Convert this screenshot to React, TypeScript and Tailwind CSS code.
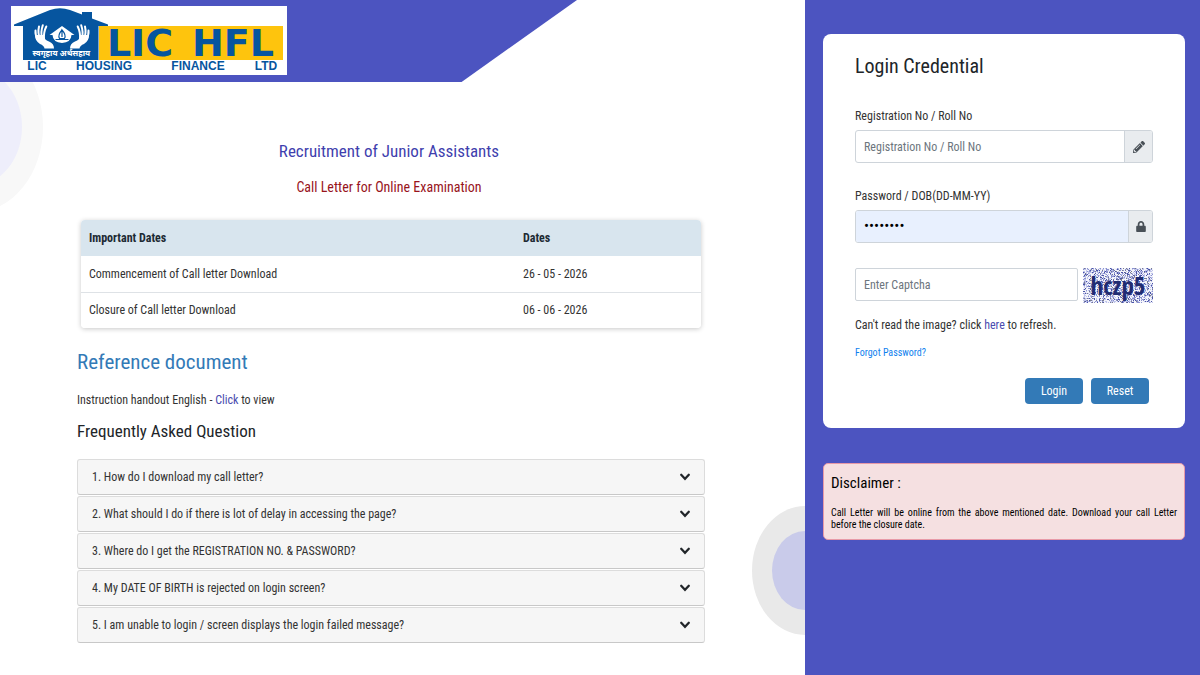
import { useId, useState } from "react";
import { FaLock, FaPencilAlt } from "react-icons/fa";

const importantDates = [
  { label: "Commencement of Call letter Download", date: "26 - 05 - 2026" },
  { label: "Closure of Call letter Download", date: "06 - 06 - 2026" },
];

const questions = [
  "1. How do I download my call letter?",
  "2. What should I do if there is lot of delay in accessing the page?",
  "3. Where do I get the REGISTRATION NO. & PASSWORD?",
  "4. My DATE OF BIRTH is rejected on login screen?",
  "5. I am unable to login / screen displays the login failed message?",
];

function Hand() {
  return (
    <g>
      <g fill="none" stroke="#fff" strokeWidth="2" strokeLinecap="round">
        <path d="M24.500 24.500 Q24 29 27 34" />
        <path d="M28 20.500 Q26.500 27 29 33" />
        <path d="M31.800 19.300 Q29.500 26 31 32" />
        <path d="M35.300 20.500 Q32.500 26 33 33" />
      </g>
      <path d="M24 29 L33 29 Q33 34 38 35.500 Q43 37.500 43 42.500 H33.500 Q33 39.500 29 38 Q24 35 24 29 Z" fill="#fff" />
    </g>
  );
}

function Logo() {
  return (
    <svg viewBox="0 0 276 69" className="block h-[69px] w-[276px] bg-white" role="img" aria-label="LIC HFL">
      <rect x="88" y="20" width="184" height="34" fill="#fec40d" />
      <path d="M3 18.500 L39 4 Q49 0.500 59 4 L71 8.500 V6 H81 V12.500 L97 18.500 V20 H87.500 V54 H12 V20 H3 Z" fill="#06559f" />
      <Hand />
      <g transform="matrix(-1 0 0 1 102 0)">
        <Hand />
      </g>
      <path d="M38.500 29 L51 20 L63.500 29 H60.500 Q60 36.500 51 37 Q42 36.500 41.500 29 Z" fill="#fff" />
      <path d="M51 24 Q46.500 29 48.500 32.500 H53.500 Q55.500 29 51 24 V31 M44.500 33.500 H57.500" fill="none" stroke="#06559f" strokeWidth="1.200" />
      <g fill="#fff" fontSize="8" fontWeight="700" fontFamily="'Noto Sans Devanagari', 'Noto Sans', sans-serif">
        <text x="34" y="50" textAnchor="middle">स्वगृहाय</text>
        <text x="64" y="50" textAnchor="middle">अर्थसहाय</text>
      </g>
      <g fill="#06559f" fontWeight="700" fontFamily="'DejaVu Sans', sans-serif" textAnchor="middle">
        <text x="129" y="50" fontSize="38">LIC</text>
        <text x="222" y="50" fontSize="38">HFL</text>
        <g fontSize="12" fontFamily="'Liberation Sans', sans-serif">
          <text x="26" y="63.500">LIC</text>
          <text x="93" y="63.500">HOUSING</text>
          <text x="187" y="63.500">FINANCE</text>
          <text x="255" y="63.500">LTD</text>
        </g>
      </g>
    </svg>
  );
}

function makeSpeckles() {
  const fills = ["#4a54a6", "#8b92d0", "#c0c4ea", "#777b90"];
  const dots: { x: number; y: number; fill: string }[] = [];
  let seed = 7919;
  for (let y = 0; y < 35; y++) {
    for (let x = 0; x < 70; x++) {
      seed = (seed * 48271) % 2147483647;
      const roll = seed % 100;
      if (roll < 58) dots.push({ x, y, fill: fills[roll < 10 ? 0 : roll < 29 ? 1 : roll < 51 ? 2 : 3] });
    }
  }
  return dots;
}

const speckles = makeSpeckles();

function Captcha() {
  return (
    <svg viewBox="0 0 70 35" className="h-[35px] w-[70px] shrink-0" role="img" aria-label="Captcha">
      <rect width="70" height="35" fill="#f4f5fb" />
      {speckles.map((d) => (
        <rect key={`${d.x}-${d.y}`} x={d.x} y={d.y} width="1" height="1" fill={d.fill} />
      ))}
      <text x="35" y="26.500" textAnchor="middle" fontSize="25" fontWeight="700" fill="#202c72" fontFamily="'Open Sans Condensed', 'Noto Sans', sans-serif">
        hczp5
      </text>
    </svg>
  );
}

function Chevron({ open }: { open: boolean }) {
  return (
    <svg viewBox="0 0 10 8" className={open ? "h-2 w-[10px] rotate-180" : "h-2 w-[10px]"} aria-hidden="true">
      <path d="M1.200 1.700 L5 5.800 L8.800 1.700" fill="none" stroke="#212529" strokeWidth="2.200" strokeLinecap="round" />
    </svg>
  );
}

function Faq() {
  const [open, setOpen] = useState<number | null>(null);
  return (
    <div className="mt-4 flex flex-col gap-px">
      {questions.map((q, i) => (
        <div key={q} className="rounded-[3px] border border-[#dcdcdc] border-b-[#c8c8c8] bg-[#f6f6f6]">
          <button
            type="button"
            aria-expanded={open === i}
            onClick={() => setOpen(open === i ? null : i)}
            className="flex h-[34px] w-full items-center justify-between px-3.5 text-left text-[12px] text-[#333]"
          >
            {q}
            <Chevron open={open === i} />
          </button>
        </div>
      ))}
    </div>
  );
}

function LoginCard() {
  const id = useId();
  return (
    <form className="rounded-lg bg-white px-8 pt-4 pb-6 text-[#333]" onSubmit={(e) => e.preventDefault()}>
      <h2 className="text-[20px] leading-8 text-[#212529]">Login Credential</h2>

      <label htmlFor={`${id}-reg`} className="mt-6 block text-[12px] leading-5">Registration No / Roll No</label>
      <div className="mt-1 flex h-[33px] overflow-hidden rounded-[3px] border border-[#ced4da]">
        <input id={`${id}-reg`} type="text" placeholder="Registration No / Roll No" className="min-w-0 flex-1 px-2 text-[12px] outline-none placeholder:text-[#6c757d]" />
        <span className="flex w-7 items-center justify-center border-l border-[#ced4da] bg-[#e9ecef] text-[#495057]">
          <FaPencilAlt className="h-3 w-3" />
        </span>
      </div>

      <label htmlFor={`${id}-pwd`} className="mt-[23px] block text-[12px] leading-5">Password / DOB(DD-MM-YY)</label>
      <div className="mt-1 flex h-[33px] overflow-hidden rounded-[3px] border border-[#ced4da]">
        <input id={`${id}-pwd`} type="password" defaultValue="26051998" className="min-w-0 flex-1 bg-[#e8f0fe] px-2 text-[15px] text-black outline-none" />
        <span className="flex w-6 items-center justify-center border-l border-[#ced4da] bg-[#e9ecef] text-[#495057]">
          <FaLock className="h-[11px] w-2.5" />
        </span>
      </div>

      <div className="mt-[25px] flex items-start gap-[5px]">
        <input aria-label="Enter Captcha" type="text" placeholder="Enter Captcha" className="h-[33px] min-w-0 flex-1 rounded-[2px] border border-[#ced4da] px-2 text-[12px] outline-none placeholder:text-[#6c757d]" />
        <Captcha />
      </div>

      <p className="mt-3 text-[12px] leading-5">
        Can't read the image? click <a href="#refresh" className="text-[#4a4cb0]">here</a> to refresh.
      </p>
      <p className="mt-2 text-[10px] leading-5">
        <a href="#forgot" className="text-[#0f7fee]">Forgot Password?</a>
      </p>
      <div className="mt-[15px] flex justify-end gap-2 pr-1">
        <button type="submit" className="h-[26px] w-[58px] rounded-[4px] bg-[#337ab7] text-[12px] text-white">Login</button>
        <button type="reset" className="h-[26px] w-[58px] rounded-[4px] bg-[#337ab7] text-[12px] text-white">Reset</button>
      </div>
    </form>
  );
}

export default function App() {
  return (
    <div className="grid min-h-screen grid-cols-1 bg-white font-['Roboto_Condensed','Roboto',sans-serif] md:grid-cols-[minmax(0,1fr)_395px]">
      <main className="relative overflow-hidden">
        <div className="absolute top-[42px] -left-[93px] flex h-[170px] w-[136px] items-center justify-center rounded-[50%] bg-[#f8f8f8]">
          <div className="h-[116px] w-[94px] rounded-[50%] bg-[#eeeefb]" />
        </div>
        <div className="absolute -right-[53px] bottom-10 flex h-[129px] w-[106px] items-center justify-center rounded-[50%] bg-[#e9e9e9]">
          <div className="h-[79px] w-[66px] rounded-[50%] bg-[#c9cbea]" />
        </div>

        <header className="relative h-[82px] w-[577px] max-w-full bg-[#4c54c0] pt-1.5 pl-[11px] [clip-path:polygon(0_0,100%_0,80%_100%,0_100%)]">
          <Logo />
        </header>

        <div className="relative pr-[100px] pb-8 pl-[77px]">
          <div className="px-1 pt-[55px]">
            <div className="pr-1 text-center">
              <h1 className="text-[17px] leading-7 text-[#3f3fae]">Recruitment of Junior Assistants</h1>
              <p className="mt-2.5 text-[14px] leading-6 text-[#98141c]">Call Letter for Online Examination</p>
            </div>
            <div className="mt-[21px] overflow-hidden rounded-[4px] shadow-[0_1px_5px_rgba(0,0,0,0.22)]">
              <table className="w-full table-fixed bg-white text-left text-[12px] text-[#333]">
                <thead className="bg-[#d8e5ee] text-[#1c2a33]">
                  <tr className="h-9">
                    <th className="w-[70%] px-2 font-bold">Important Dates</th>
                    <th className="px-2 font-bold">Dates</th>
                  </tr>
                </thead>
                <tbody>
                  {importantDates.map((row) => (
                    <tr key={row.label} className="h-9 border-b border-[#dee2e6] last:border-b-0">
                      <td className="px-2">{row.label}</td>
                      <td className="px-2">{row.date}</td>
                    </tr>
                  ))}
                </tbody>
              </table>
            </div>
          </div>

          <h2 className="mt-[18px] text-[21px] leading-8 text-[#337ab7]">Reference document</h2>
          <p className="mt-3 text-[12px] leading-5 text-[#333]">
            Instruction handout English - <a href="#handout" className="text-[#4a4cb0]">Click</a> to view
          </p>
          <h3 className="mt-[9px] text-[17px] leading-6 text-[#212529]">Frequently Asked Question</h3>
          <Faq />
        </div>
      </main>

      <aside className="bg-[#4c54c0] pt-[34px] pr-[15px] pb-8 pl-[18px]">
        <LoginCard />
        <section className="mt-[35px] rounded-[5px] border border-[#e79aa8] bg-[#f5e0e1] px-[7px] pt-[7px] pb-2 text-black">
          <h2 className="text-[15px] leading-6">Disclaimer :</h2>
          <p className="mt-3 text-justify text-[10px] leading-3">
            Call Letter will be online from the above mentioned date. Download your call Letter before the closure date.
          </p>
        </section>
      </aside>
    </div>
  );
}
